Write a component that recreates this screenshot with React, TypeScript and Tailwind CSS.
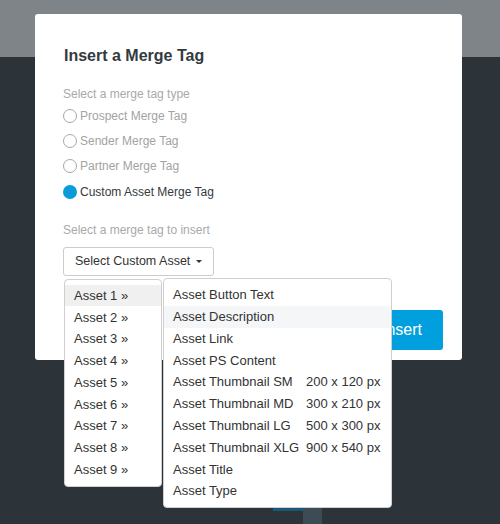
import React from 'react';

const tagTypes = [
    { label: 'Prospect Merge Tag', checked: false },
    { label: 'Sender Merge Tag', checked: false },
    { label: 'Partner Merge Tag', checked: false },
    { label: 'Custom Asset Merge Tag', checked: true },
];

const assets = ['Asset 1', 'Asset 2', 'Asset 3', 'Asset 4', 'Asset 5', 'Asset 6', 'Asset 7', 'Asset 8', 'Asset 9'];

const fields: { label: string; size?: string }[] = [
    { label: 'Asset Button Text' },
    { label: 'Asset Description' },
    { label: 'Asset Link' },
    { label: 'Asset PS Content' },
    { label: 'Asset Thumbnail SM', size: '200 x 120 px' },
    { label: 'Asset Thumbnail MD', size: '300 x 210 px' },
    { label: 'Asset Thumbnail LG', size: '500 x 300 px' },
    { label: 'Asset Thumbnail XLG', size: '900 x 540 px' },
    { label: 'Asset Title' },
    { label: 'Asset Type' },
];

const Radio = ({ label, checked }: { label: string; checked: boolean }) => (
    <label className="flex items-center h-[25.4px] gap-[3px]">
        {checked ? (
            <span className="w-[14px] h-[14px] rounded-full bg-[#0a9bd9]" />
        ) : (
            <span className="w-[14px] h-[14px] rounded-full border border-[#a8a8a8] bg-white" />
        )}
        <span className={`text-[12px] leading-[16px] ${checked ? 'text-[#333a40]' : 'text-[#a3a3a3]'}`}>{label}</span>
    </label>
);

export default function App() {
    return (
        <div
            className="relative w-[500px] h-[524px] overflow-hidden flex flex-col bg-[#2c3339]"
            style={{ fontFamily: '"Liberation Sans", Arial, sans-serif' }}
        >
            {/* page behind the modal */}
            <div className="h-[83px] bg-[#7e8487]" />
            <div className="flex-1 flex items-start pt-[424px] pl-[273px]">
                <div className="w-[30px] h-[30px] bg-[#1a5877]" />
                <div className="w-[19px] h-[30px] mt-[13px] bg-[#3d4c54]" />
            </div>

            {/* modal */}
            <div className="absolute left-[35px] top-[14px] w-[427px] h-[346px] bg-white rounded-[3px] flex flex-col">
                <div className="pl-[28px] pr-[18px] pt-[32px]">
                    <h2 className="ml-[1px] text-[16px] leading-[20px] font-bold text-[#333a40]">Insert a Merge Tag</h2>

                    <p className="mt-[20px] text-[12px] leading-[16px] text-[#a9a9a9]">Select a merge tag type</p>
                    <div className="mt-[1px] flex flex-col">
                        {tagTypes.map((t) => (
                            <Radio key={t.label} label={t.label} checked={t.checked} />
                        ))}
                    </div>

                    <p className="mt-[17px] text-[12px] leading-[16px] text-[#a9a9a9]">Select a merge tag to insert</p>

                    <div className="relative mt-[9px] w-fit">
                        <button className="h-[29px] flex items-center gap-[6px] pl-[11px] pr-[11px] border border-[#cccccc] rounded-[3px] bg-white text-[12.5px] text-[#333333]">
                            Select Custom Asset
                            <span className="w-0 h-0 border-x-[3px] border-x-transparent border-t-[3px] border-t-[#333333]" />
                        </button>

                        {/* asset list menu */}
                        <ul className="absolute z-10 left-[1px] top-[32px] w-[98px] py-[5px] bg-white border border-[#cfcfcf] rounded-[4px]">
                            {assets.map((a, i) => (
                                <li
                                    key={a}
                                    className={`h-[21.8px] flex items-center pl-[9px] text-[13px] text-[#333333] ${i === 0 ? 'bg-[#f0f0f0]' : ''}`}
                                >
                                    {a} »
                                </li>
                            ))}
                        </ul>

                        {/* field submenu */}
                        <ul className="absolute z-10 left-[100px] top-[31.5px] w-[229px] py-[5px] bg-white border border-[#cfcfcf] rounded-[4px]">
                            {fields.map((f, i) => (
                                <li
                                    key={f.label}
                                    className={`h-[21.8px] flex items-center pl-[9px] text-[13px] text-[#333333] whitespace-nowrap ${i === 1 ? 'bg-[#f5f6f8]' : ''}`}
                                >
                                    <span className="w-[133px]">{f.label}</span>
                                    {f.size && <span>{f.size}</span>}
                                </li>
                            ))}
                        </ul>
                    </div>
                </div>

                <div className="mt-auto flex justify-end pr-[19px] pb-[10px]">
                    <button className="h-[40px] px-[21px] rounded-[3px] bg-[#019fde] text-white text-[16px]">Insert</button>
                </div>
            </div>
        </div>
    );
}
